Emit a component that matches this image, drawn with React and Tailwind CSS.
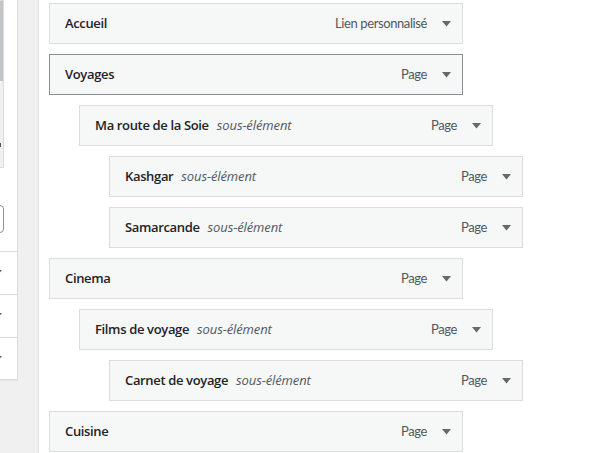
import React from "react";

const items = [
  { t: "Accueil", d: 0, type: "Lien personnalisé" },
  { t: "Voyages", d: 0, type: "Page", focus: true },
  { t: "Ma route de la Soie", d: 1, type: "Page", sub: true },
  { t: "Kashgar", d: 2, type: "Page", sub: true },
  { t: "Samarcande", d: 2, type: "Page", sub: true },
  { t: "Cinema", d: 0, type: "Page" },
  { t: "Films de voyage", d: 1, type: "Page", sub: true },
  { t: "Carnet de voyage", d: 2, type: "Page", sub: true },
  { t: "Cuisine", d: 0, type: "Page" },
];

const indent = ["ml-0", "ml-[30px]", "ml-[60px]"];

function Arrow({ className = "" }) {
  return (
    <svg width="9" height="6" viewBox="0 0 9 6" className={className}>
      <polygon points="0,0 9,0 4.5,5.5" fill="#646970" />
    </svg>
  );
}

function Item({ it }) {
  return (
    <div
      className={`${indent[it.d]} w-[414px] h-[41px] flex items-center justify-between border bg-[#f6f7f7] ${
        it.focus ? "border-[#8c8f94]" : "border-[#dcdcde]"
      }`}
    >
      <div className="pl-[15px] flex items-baseline gap-[8px]">
        <span className="text-[13px] font-semibold text-[#1d2327]" style={{ fontFamily: '"Open Sans", sans-serif', letterSpacing: "-0.35px" }}>{it.t}</span>
        {it.sub && <span className="text-[13px] italic text-[#50575e]" style={{ fontFamily: '"Open Sans", sans-serif', letterSpacing: "-0.1px" }}>sous-élément</span>}
      </div>
      <div className="flex items-center pr-[11px]">
        <span className="text-[13px] text-[#50575e] tracking-[-0.4px]" style={{ fontFamily: 'Lato, sans-serif' }}>{it.type}</span>
        <Arrow className="ml-[15px]" />
      </div>
    </div>
  );
}

export default function App() {
  return (
    <div
      className="w-[600px] h-[453px] flex overflow-hidden bg-white"
      style={{ fontFamily: '"Open Sans", "Noto Sans", sans-serif' }}
    >
      {/* left clipped panel */}
      <div className="w-[18px] shrink-0 bg-[#f0f0f1] relative overflow-hidden">
        <div className="flex flex-col items-end">
          <div className="w-[18px] h-[380px] bg-white border-r border-b border-[#dcdcde] shadow-[0_1px_1px_rgba(0,0,0,0.04)] flex flex-col items-end overflow-hidden">
            <div className="w-[200px] h-[168px] mr-[13px] shrink-0 bg-[#f0f0f1] border border-[#dcdcde] relative flex justify-end">
              <div className="w-[4px] h-[80px] bg-[#c3c4c7]" />
              <div className="absolute right-[2px] top-[142px] w-[3px] h-[4px] bg-[#50575e]" />
            </div>
            <div className="w-[200px] h-[28px] mr-[13px] mt-[37px] shrink-0 border border-[#8c8f94] rounded-[4px] bg-white" />
            <div className="w-[200px] mt-[18px] shrink-0 flex flex-col">
              {[0, 1, 2].map((i) => (
                <div key={i} className="h-[43px] border-t border-[#dcdcde] flex items-center justify-end pr-[15px]">
                  <Arrow />
                </div>
              ))}
            </div>
          </div>
        </div>
      </div>
      {/* gutter */}
      <div className="w-[20px] shrink-0 bg-[#f0f0f1]" />
      {/* main */}
      <div className="flex-1 border-l border-[#e0e0e0] pl-[10px] pt-[3px] flex flex-col gap-[10px]">
        {items.map((it, i) => (
          <Item key={i} it={it} />
        ))}
      </div>
    </div>
  );
}
